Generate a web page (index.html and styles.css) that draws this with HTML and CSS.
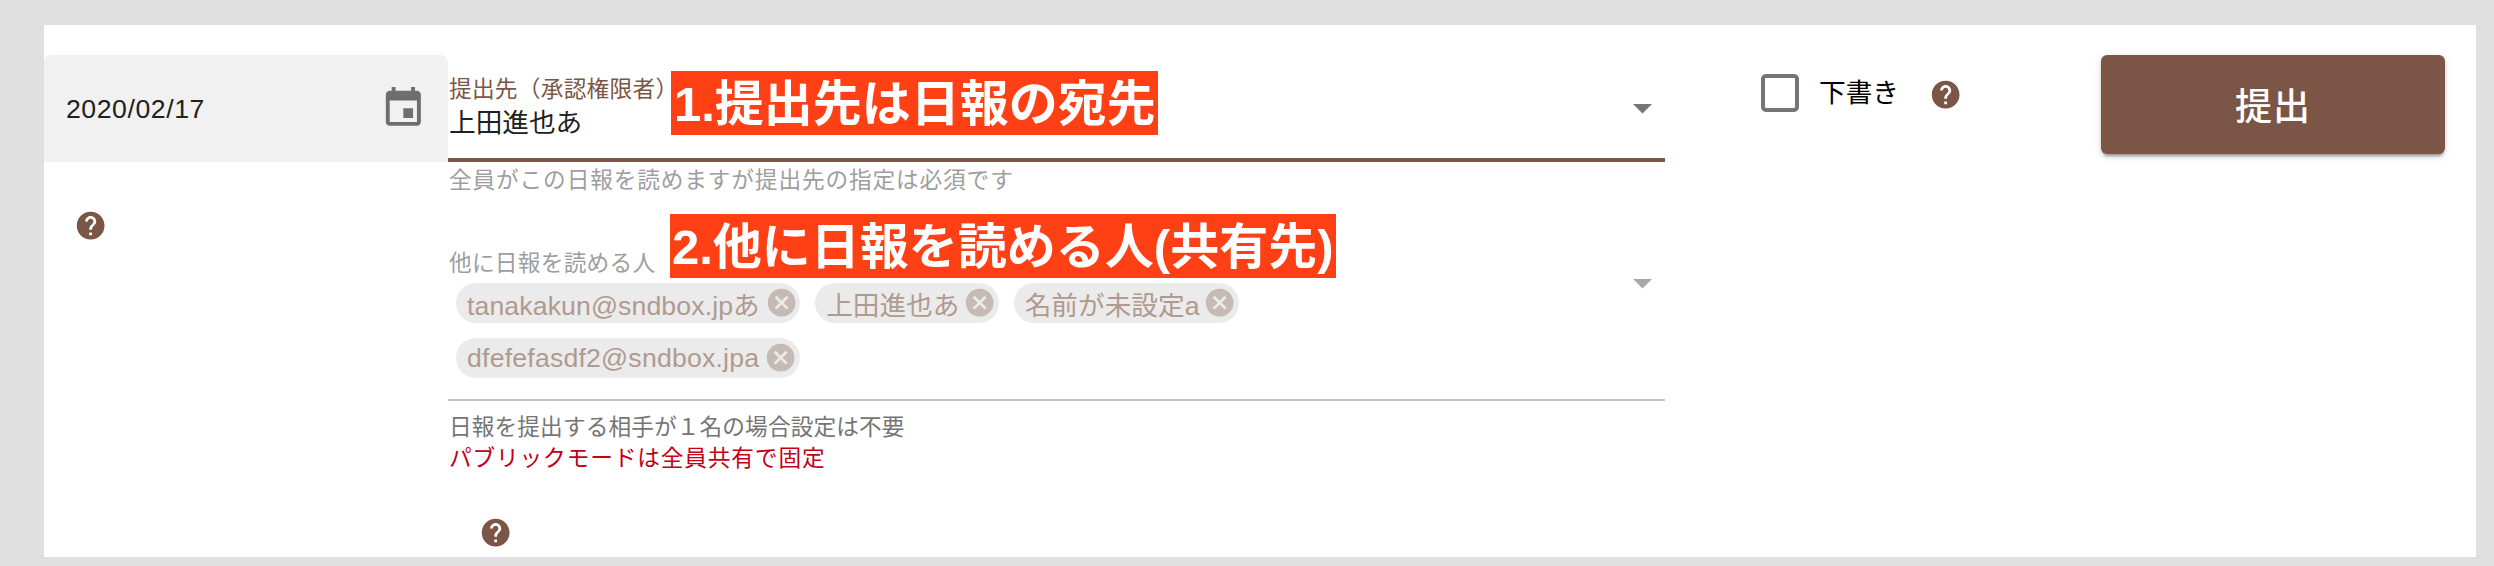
FILE: index.html
```html
<!DOCTYPE html>
<html lang="ja">
<head>
<meta charset="utf-8">
<title>日報</title>
<link rel="stylesheet" href="styles.css">
</head>
<body>
<svg class="defs" width="0" height="0" aria-hidden="true">
  <symbol id="help" viewBox="0 0 24 24"><path d="M12 2C6.48 2 2 6.48 2 12s4.480 10 10 10 10-4.480 10-10S17.520 2 12 2zm1 17h-2v-2h2v2zm2.070-7.750l-.9.920C13.450 12.900 13 13.500 13 15h-2v-.5c0-1.100.45-2.100 1.170-2.830l1.240-1.260c.37-.36.59-.86.59-1.410 0-1.100-.9-2-2-2s-2 .9-2 2H8c0-2.210 1.790-4 4-4s4 1.790 4 4c0 .88-.36 1.680-.93 2.250z"/></symbol>
  <symbol id="cancel" viewBox="0 0 24 24"><path d="M12 2C6.470 2 2 6.470 2 12s4.470 10 10 10 10-4.470 10-10S17.530 2 12 2zm5 13.590L15.590 17 12 13.410 8.410 17 7 15.590 10.590 12 7 8.410 8.410 7 12 10.590 15.590 7 17 8.410 13.410 12 17 15.590z"/></symbol>
</svg>
<main class="card">
  <section class="date-col">
    <div class="date-field">
      <span>2020/02/17</span>
      <svg class="event" viewBox="0 0 24 24"><path d="M17 12h-5v5h5v-5zM16 1v2H8V1H6v2H5c-1.110 0-1.990.9-1.990 2L3 19c0 1.100.89 2 2 2h14c1.100 0 2-.9 2-2V5c0-1.100-.9-2-2-2h-1V1h-2zm3 18H5V8h14v11z"/></svg>
    </div>
    <svg class="help"><use href="#help"/></svg>
  </section>

  <section class="form-col">
    <div class="select approver">
      <div class="select-body">
        <div class="label">提出先（承認権限者）</div>
        <div class="value">上田進也あ</div>
      </div>
      <svg class="arrow" viewBox="0 0 20 10"><path d="M0 0h19l-9.500 9.500z"/></svg>
      <div class="note note-first">1.提出先は日報の宛先</div>
    </div>
    <p class="helper">全員がこの日報を読めますが提出先の指定は必須です</p>

    <div class="select readers">
      <div class="select-body">
        <div class="label">他に日報を読める人</div>
        <div class="chips">
          <span class="chip">tanakakun@sndbox.jpあ<svg><use href="#cancel"/></svg></span>
          <span class="chip chip-narrow">上田進也あ<svg><use href="#cancel"/></svg></span>
          <span class="chip chip-narrow">名前が未設定a<svg><use href="#cancel"/></svg></span>
          <span class="chip chip-wide">dfefefasdf2@sndbox.jpa<svg><use href="#cancel"/></svg></span>
        </div>
      </div>
      <svg class="arrow" viewBox="0 0 20 10"><path d="M0 0h19l-9.500 9.500z"/></svg>
      <div class="note note-second">2.他に日報を読める人(共有先)</div>
    </div>
    <p class="info">日報を提出する相手が１名の場合設定は不要</p>
    <p class="warning">パブリックモードは全員共有で固定</p>
    <svg class="help"><use href="#help"/></svg>
  </section>

  <section class="draft-col">
    <span class="checkbox"></span>
    <span class="draft-label">下書き</span>
    <svg class="help"><use href="#help"/></svg>
  </section>

  <button class="submit">提出</button>
</main>
</body>
</html>
```
FILE: styles.css
```css
* { box-sizing: border-box; }

body {
  margin: 0;
  height: 566px;
  padding: 25px 18px 9px 44px;
  background: #e0e0e0;
  color: #212121;
  font-family: "Liberation Sans", "Noto Sans CJK JP", sans-serif;
  font-size: 26.67px;
  overflow: hidden;
}

.defs { position: absolute; }

p { margin: 0; }

.card {
  display: flex;
  align-items: flex-start;
  height: 532px;
  padding: 30px 30px 0 0;
  background: #fff;
}

.help {
  display: block;
  flex: none;
  width: 33.3px;
  height: 33.3px;
  fill: #7b5647;
}

.date-col { width: 404px; }

.date-field {
  display: flex;
  align-items: center;
  justify-content: space-between;
  height: 107px;
  padding: 0 21px 0 22px;
  border-radius: 7px 7px 0 0;
  background: #f1f1f1;
  letter-spacing: 0.55px;
}

.date-field span { padding-top: 2px; }

.event {
  width: 46.7px;
  height: 46.7px;
  fill: #6e6e6e;
}

.date-col .help { margin: 47px 0 0 30px; }

.form-col { width: 1217px; }

.select {
  position: relative;
  display: flex;
  justify-content: space-between;
}

.label {
  padding-left: 1px;
  font-size: 22.7px;
  line-height: 30px;
  letter-spacing: 0.25px;
  white-space: nowrap;
}

.arrow {
  flex: none;
  width: 20px;
  height: 10px;
  margin-right: 12px;
  fill: #757575;
}

.approver {
  height: 107px;
  padding-top: 19px;
  border-bottom: 4px solid #7b5647;
}

.approver .label { color: #7b5647; }
.approver .value { padding-left: 1px; line-height: 39px; }
.approver .arrow { margin-top: 30px; }

.helper {
  padding-left: 1px;
  font-size: 22.7px;
  line-height: 32px;
  letter-spacing: 0.84px;
  margin-top: 2px;
  color: #9e9e9e;
}

.readers {
  height: 154px;
  margin-top: 51px;
  padding-top: 1px;
  border-bottom: 2px solid #c2c2c2;
}

.readers .label { color: #9e9e9e; }
.readers .arrow { margin-top: 31px; fill: #a8a8a8; }

.chips {
  display: flex;
  flex-wrap: wrap;
  gap: 15px;
  width: 820px;
  padding: 5px 0 0 8px;
}

.chip {
  display: inline-flex;
  align-items: center;
  height: 40px;
  padding: 0 2px 0 11px;
  border-radius: 20px;
  background: #ebebeb;
  color: #b09a90;
  letter-spacing: 0.1px;
  white-space: nowrap;
}

.chip-narrow { letter-spacing: 0; }
.chip-wide { letter-spacing: 0.2px; }

.chip svg {
  width: 33.3px;
  height: 33.3px;
  margin-left: 5px;
  fill: #c6bab4;
}

.chip-narrow svg { margin-left: 4px; }

.note {
  position: absolute;
  height: 64px;
  padding-left: 3px;
  background: #ff4015;
  color: #fff;
  font-size: 49px;
  font-weight: 700;
  line-height: 66px;
  white-space: nowrap;
}

.note-first { left: 223px; top: 16px; width: 487px; }
.note-second { left: 222px; top: -33px; width: 666px; padding-left: 2px; }

.info {
  margin-top: 10px;
  padding-left: 1px;
  font-size: 22.7px;
  line-height: 32px;
  letter-spacing: 0.09px;
  color: #757575;
}

.warning {
  padding-left: 1px;
  font-size: 22.7px;
  line-height: 31px;
  letter-spacing: 0.84px;
  color: #c00018;
}

.form-col .help { margin: 42px 0 0 31px; }

.draft-col {
  display: flex;
  align-items: center;
  width: 436px;
  height: 76px;
  padding-left: 96px;
  color: #000;
}

.checkbox {
  width: 38px;
  height: 38px;
  border: 4px solid #757575;
  border-radius: 5px;
}

.draft-label { margin-left: 20px; padding-bottom: 5px; }
.draft-col .help { margin: 3px 0 0 30px; }

.submit {
  width: 344px;
  height: 99px;
  padding: 0 0 2px;
  border: 0;
  border-radius: 6px;
  background: #7b5647;
  box-shadow: 0 5px 2px -3px rgba(0,0,0,.2), 0 3px 3px rgba(0,0,0,.14), 0 2px 8px rgba(0,0,0,.12);
  color: #fff;
  font-family: inherit;
  font-size: 37px;
  font-weight: 500;
  letter-spacing: 1px;
}
```
